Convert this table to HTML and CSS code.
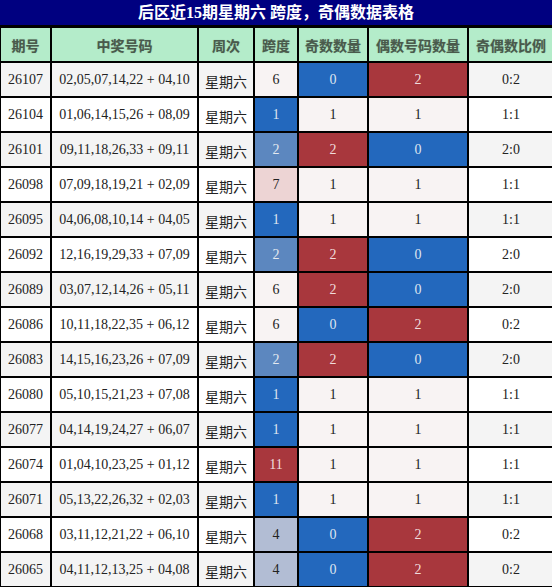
FILE: index.html
```html
<!DOCTYPE html>
<html lang="zh">
<head>
<meta charset="utf-8">
<title>后区近15期星期六 跨度，奇偶数据表格</title>
<link rel="stylesheet" href="styles.css">
</head>
<body>
<div class="wrap">
  <div class="title">后区近15期星期六 跨度，奇偶数据表格</div>
  <table class="grid">
    <colgroup>
      <col class="c1"><col class="c2"><col class="c3"><col class="c4"><col class="c5"><col class="c6"><col class="c7">
    </colgroup>
    <thead>
      <tr><th>期号</th><th>中奖号码</th><th>周次</th><th>跨度</th><th>奇数数量</th><th>偶数号码数量</th><th>奇偶数比例</th></tr>
    </thead>
    <tbody>
      <tr class="g"><td>26107</td><td>02,05,07,14,22 + 04,10</td><td class="wk">星期六</td><td class="pl">6</td><td class="bl">0</td><td class="rd">2</td><td>0:2</td></tr>
      <tr><td>26104</td><td>01,06,14,15,26 + 08,09</td><td class="wk">星期六</td><td class="bl">1</td><td class="pl">1</td><td class="pl">1</td><td>1:1</td></tr>
      <tr class="g"><td>26101</td><td>09,11,18,26,33 + 09,11</td><td class="wk">星期六</td><td class="lb">2</td><td class="rd">2</td><td class="bl">0</td><td>2:0</td></tr>
      <tr><td>26098</td><td>07,09,18,19,21 + 02,09</td><td class="wk">星期六</td><td class="pk">7</td><td class="pl">1</td><td class="pl">1</td><td>1:1</td></tr>
      <tr class="g"><td>26095</td><td>04,06,08,10,14 + 04,05</td><td class="wk">星期六</td><td class="bl">1</td><td class="pl">1</td><td class="pl">1</td><td>1:1</td></tr>
      <tr><td>26092</td><td>12,16,19,29,33 + 07,09</td><td class="wk">星期六</td><td class="lb">2</td><td class="rd">2</td><td class="bl">0</td><td>2:0</td></tr>
      <tr class="g"><td>26089</td><td>03,07,12,14,26 + 05,11</td><td class="wk">星期六</td><td class="pl">6</td><td class="rd">2</td><td class="bl">0</td><td>2:0</td></tr>
      <tr><td>26086</td><td>10,11,18,22,35 + 06,12</td><td class="wk">星期六</td><td class="pl">6</td><td class="bl">0</td><td class="rd">2</td><td>0:2</td></tr>
      <tr class="g"><td>26083</td><td>14,15,16,23,26 + 07,09</td><td class="wk">星期六</td><td class="lb">2</td><td class="rd">2</td><td class="bl">0</td><td>2:0</td></tr>
      <tr><td>26080</td><td>05,10,15,21,23 + 07,08</td><td class="wk">星期六</td><td class="bl">1</td><td class="pl">1</td><td class="pl">1</td><td>1:1</td></tr>
      <tr class="g"><td>26077</td><td>04,14,19,24,27 + 06,07</td><td class="wk">星期六</td><td class="bl">1</td><td class="pl">1</td><td class="pl">1</td><td>1:1</td></tr>
      <tr><td>26074</td><td>01,04,10,23,25 + 01,12</td><td class="wk">星期六</td><td class="rd">11</td><td class="pl">1</td><td class="pl">1</td><td>1:1</td></tr>
      <tr class="g"><td>26071</td><td>05,13,22,26,32 + 02,03</td><td class="wk">星期六</td><td class="bl">1</td><td class="pl">1</td><td class="pl">1</td><td>1:1</td></tr>
      <tr><td>26068</td><td>03,11,12,21,22 + 06,10</td><td class="wk">星期六</td><td class="gb">4</td><td class="bl">0</td><td class="rd">2</td><td>0:2</td></tr>
      <tr class="g"><td>26065</td><td>04,11,12,13,25 + 04,08</td><td class="wk">星期六</td><td class="gb">4</td><td class="bl">0</td><td class="rd">2</td><td>0:2</td></tr>
    </tbody>
  </table>
</div>
</body>
</html>
```
FILE: styles.css
```css
html, body {
  margin: 0;
  padding: 0;
  background: #ffffff;
}
.wrap {
  width: 552px;
  overflow: hidden;
}
.title {
  height: 25px;
  line-height: 25px;
  background: #000080;
  color: #ffffff;
  font-family: "Liberation Serif", "Noto Sans CJK SC", serif;
  font-weight: bold;
  font-size: 16px;
  text-align: center;
  border-bottom: 2px solid #000;
  box-sizing: content-box;
}
.grid {
  border-collapse: collapse;
  table-layout: fixed;
  width: 554px;
  margin-left: -1px;
  margin-top: -1px;
  font-family: "Liberation Serif", "Noto Sans CJK SC", serif;
  font-size: 14px;
  color: #222;
}
.c1 { width: 51px; }
.c2 { width: 147px; }
.c3 { width: 56px; }
.c4 { width: 44px; }
.c5 { width: 70px; }
.c6 { width: 100px; }
.c7 { width: 86px; }
.grid th, .grid td {
  border: 2px solid #000;
  text-align: center;
  padding: 0;
  white-space: nowrap;
}
.grid th {
  height: 33px;
  background: #b4ecca;
  color: #4a5a4c;
  font-family: "Noto Sans CJK SC", sans-serif;
  font-weight: bold;
  font-size: 14px;
  text-shadow: 0 0 1px rgba(60, 90, 70, 0.4);
}
.grid td {
  height: 33px;
  background: #ffffff;
}
.grid tr.g td {
  background: #f4f4f4;
}
.grid td.wk {
  font-family: "Noto Sans CJK SC", sans-serif;
  padding-top: 3px;
  height: 30px;
}
.grid td.pl, .grid tr.g td.pl { background: #f8f3f3; }
.grid td.bl, .grid tr.g td.bl { background: #2368bd; color: #dfe6f0; }
.grid td.rd, .grid tr.g td.rd { background: #a8373d; color: #f0dcdc; }
.grid td.lb, .grid tr.g td.lb { background: #5c87bf; color: #e4e9f0; }
.grid td.pk, .grid tr.g td.pk { background: #edd4d4; color: #222; }
.grid td.gb, .grid tr.g td.gb { background: #b2bdd4; color: #222; }
```
